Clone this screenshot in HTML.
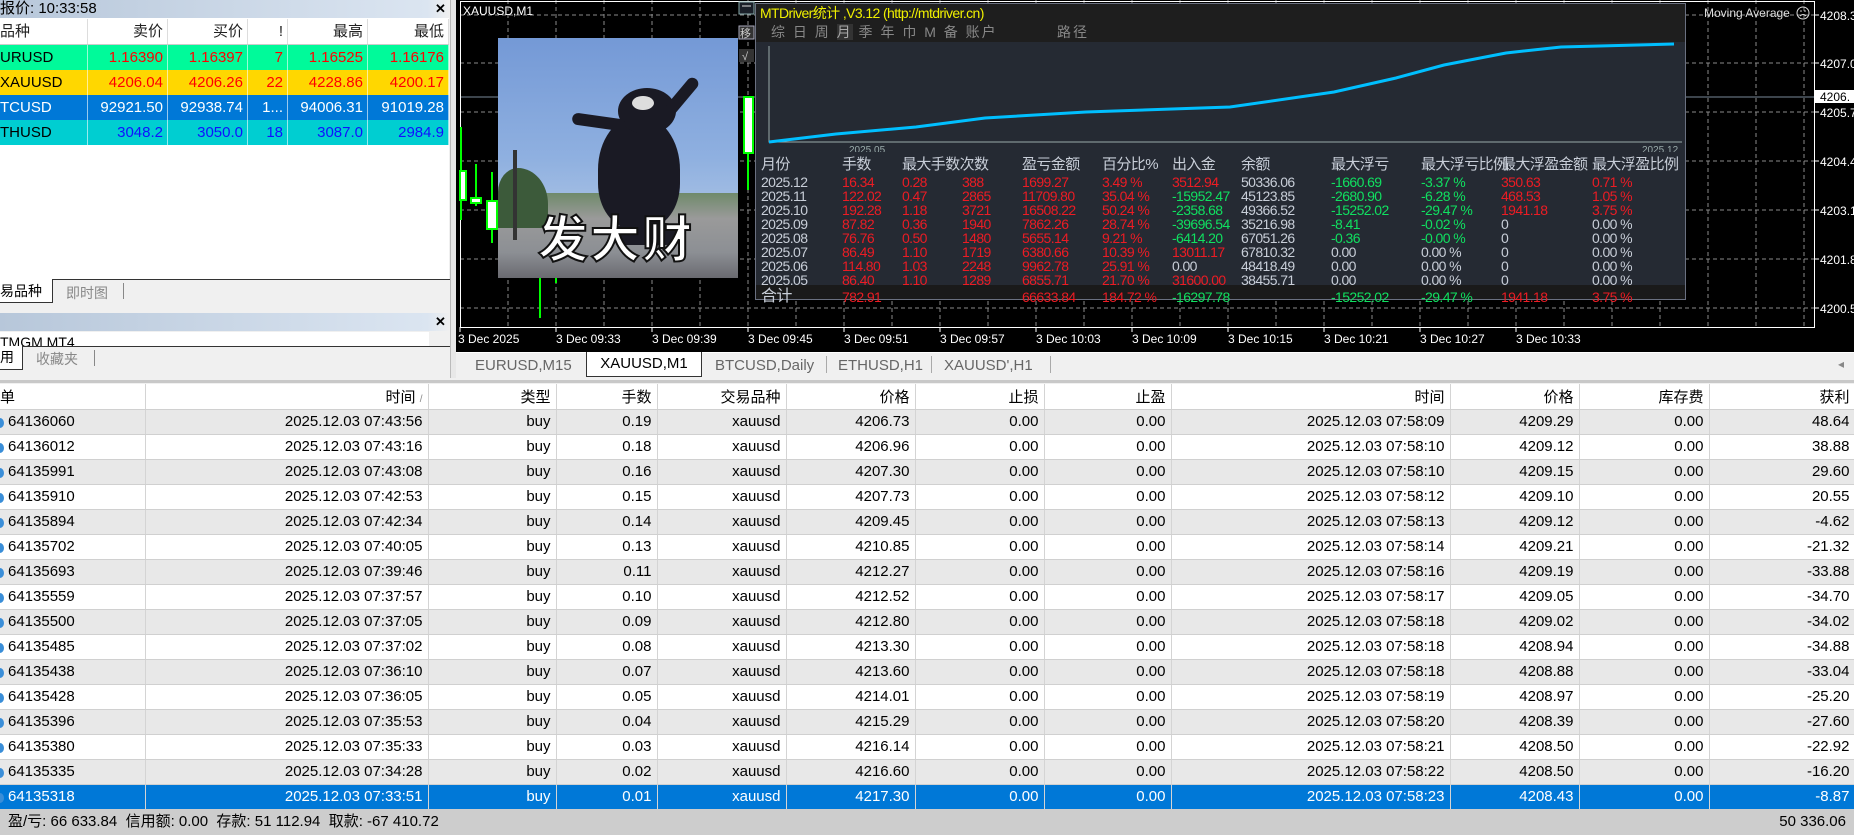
<!DOCTYPE html>
<html><head><meta charset="utf-8"><style>
*{margin:0;padding:0;box-sizing:border-box}
body{width:1854px;height:835px;overflow:hidden;background:#f0f0f0;font-family:"Liberation Sans","Noto Sans CJK SC",sans-serif;position:relative}
.a{position:absolute;white-space:nowrap}
.q{position:absolute;left:0;width:449px;height:25px;font-size:15px;line-height:25px}
.q span{position:absolute;top:0;height:25px;text-align:right;padding-right:4px;border-right:1px solid rgba(255,255,255,.6)}
.mt{position:absolute;font-family:"Liberation Sans Narrow","Liberation Sans","Noto Sans CJK SC",sans-serif;font-size:14px;letter-spacing:-.6px;line-height:14px;white-space:nowrap}
.r{color:#ec1c24}.g{color:#10e060}.w{color:#c8ced8}
table{border-collapse:collapse;table-layout:fixed;position:absolute;left:0;top:384px;width:1854px;font-size:15px}
td{height:25px;text-align:right;padding-right:5px;border-right:1px solid #d4d4d4;border-bottom:1px solid #d0d0d0;white-space:nowrap;overflow:hidden}
tr.h td{background:#fff;height:25px}
tr.o td{background:#e8e8e8}
tr.e td{background:#fff}
tr.s td{background:#0078d7;color:#fff}
td.f{text-align:left;padding-left:8px;position:relative}
</style></head><body>

<!-- Quote panel -->
<div class="a" style="left:0;top:0;width:450px;height:18px;background:linear-gradient(90deg,#b7c7da,#dbe5f1 95%,#f0f0f0);font-size:15px;line-height:18px;padding-left:0">报价: 10:33:58</div>
<div class="a" style="left:435px;top:1px;font-size:13px;font-weight:bold">✕</div>
<div class="a" style="left:0;top:18px;width:449px;height:262px;background:#fff"></div>
<div class="q" style="top:19px;background:#fff;color:#222;height:26px;line-height:26px;border-bottom:1px solid #ccc">
<span style="left:0;width:88px;text-align:left;border-color:#ddd">品种</span><span style="left:88px;width:80px;border-color:#ddd">卖价</span><span style="left:168px;width:80px;border-color:#ddd">买价</span><span style="left:248px;width:40px;border-color:#ddd">!</span><span style="left:288px;width:80px;border-color:#ddd">最高</span><span style="left:368px;width:81px;border-color:#ddd">最低</span></div>
<div class="q" style="top:45px;background:#00fa9a;color:#f00"><span style="left:0;width:88px;text-align:left;color:#000">URUSD</span><span style="left:88px;width:80px">1.16390</span><span style="left:168px;width:80px">1.16397</span><span style="left:248px;width:40px">7</span><span style="left:288px;width:80px">1.16525</span><span style="left:368px;width:81px">1.16176</span></div>
<div class="q" style="top:70px;background:#ffd700;color:#f00"><span style="left:0;width:88px;text-align:left;color:#000">XAUUSD</span><span style="left:88px;width:80px">4206.04</span><span style="left:168px;width:80px">4206.26</span><span style="left:248px;width:40px">22</span><span style="left:288px;width:80px">4228.86</span><span style="left:368px;width:81px">4200.17</span></div>
<div class="q" style="top:95px;background:#0078d7;color:#fff"><span style="left:0;width:88px;text-align:left">TCUSD</span><span style="left:88px;width:80px">92921.50</span><span style="left:168px;width:80px">92938.74</span><span style="left:248px;width:40px">1...</span><span style="left:288px;width:80px">94006.31</span><span style="left:368px;width:81px">91019.28</span></div>
<div class="q" style="top:120px;background:#00ced1;color:#1010ff"><span style="left:0;width:88px;text-align:left;color:#000">THUSD</span><span style="left:88px;width:80px">3048.2</span><span style="left:168px;width:80px">3050.0</span><span style="left:248px;width:40px">18</span><span style="left:288px;width:80px">3087.0</span><span style="left:368px;width:81px">2984.9</span></div>
<div class="a" style="left:0;top:279px;width:450px;height:26px;background:#f0f0f0;border-top:1px solid #333"></div>
<div class="a" style="left:0;top:279px;width:53px;height:24px;background:#fff;border-right:1px solid #333;border-bottom:1px solid #333;font-size:14px;line-height:24px">易品种</div>
<div class="a" style="left:66px;top:283px;font-size:14px;color:#888">即时图</div>
<div class="a" style="left:123px;top:283px;width:1px;height:16px;background:#888"></div>
<div class="a" style="left:0;top:313px;width:450px;height:18px;background:linear-gradient(90deg,#b7c7da,#dbe5f1 95%,#f0f0f0)"></div>
<div class="a" style="left:435px;top:314px;font-size:13px;font-weight:bold">✕</div>
<div class="a" style="left:0;top:332px;width:429px;height:15px;background:#fff;overflow:hidden;font-size:14px;line-height:20px">TMGM MT4</div>
<div class="a" style="left:0;top:346px;width:450px;height:1px;background:#333"></div>
<div class="a" style="left:0;top:346px;width:23px;height:24px;background:#fff;border-right:1px solid #333;border-bottom:1px solid #333;font-size:14px;line-height:22px">用</div>
<div class="a" style="left:36px;top:349px;font-size:14px;color:#888">收藏夹</div>
<div class="a" style="left:94px;top:350px;width:1px;height:16px;background:#888"></div>
<div class="a" style="left:450px;top:0;width:6px;height:378px;background:#e8e8e8;border-left:1px solid #bbb"></div>

<!-- Chart -->
<div class="a" style="left:456px;top:0;width:1398px;height:352px;background:#000"></div>
<svg class="a" style="left:0;top:0" width="1854" height="352">
<g stroke="#8a8a8a" stroke-dasharray="4,3" stroke-width="1">
<path d="M460 15H1814M460 63H1814M460 112H1814M460 161H1814M460 210H1814M460 259H1814M460 308H1814"/>
<path d="M508 0V327M556 0V327M604 0V327M652 0V327M700 0V327M748 0V327M796 0V327M844 0V327M892 0V327M940 0V327M988 0V327M1036 0V327M1084 0V327M1132 0V327M1180 0V327M1228 0V327M1276 0V327M1324 0V327M1372 0V327M1420 0V327M1468 0V327M1516 0V327M1564 0V327M1612 0V327M1660 0V327M1708 0V327M1756 0V327M1804 0V327"/>
</g>
<path d="M460 97H1814" stroke="#778899"/>
<rect x="460.5" y="1.5" width="1354" height="326" fill="none" stroke="#fff"/>
<g stroke="#fff"><path d="M460 327v5M556 327v5M652 327v5M748 327v5M844 327v5M940 327v5M1036 327v5M1132 327v5M1228 327v5M1324 327v5M1420 327v5M1516 327v5M1814 15h5M1814 63h5M1814 112h5M1814 161h5M1814 210h5M1814 259h5M1814 308h5"/></g>
<g stroke="#0f0" stroke-width="2" fill="#fff">
<path d="M461 127V220M476 164V206M492 172V243M540 278V318M556 278V283M748 97V190"/>
<rect x="460" y="171" width="6" height="29"/><rect x="471" y="198" width="10" height="5"/><rect x="487" y="201" width="10" height="28"/><rect x="744" y="97" width="9" height="56"/>
</g>
<g fill="#fff" font-size="12" font-family="Liberation Sans,sans-serif">
<text x="463" y="15">XAUUSD,M1</text>
<text x="458" y="343">3 Dec 2025</text><text x="556" y="343">3 Dec 09:33</text><text x="652" y="343">3 Dec 09:39</text><text x="748" y="343">3 Dec 09:45</text><text x="844" y="343">3 Dec 09:51</text><text x="940" y="343">3 Dec 09:57</text><text x="1036" y="343">3 Dec 10:03</text><text x="1132" y="343">3 Dec 10:09</text><text x="1228" y="343">3 Dec 10:15</text><text x="1324" y="343">3 Dec 10:21</text><text x="1420" y="343">3 Dec 10:27</text><text x="1516" y="343">3 Dec 10:33</text>
<text x="1820" y="20">4208.3</text><text x="1820" y="68">4207.0</text><text x="1820" y="117">4205.7</text><text x="1820" y="166">4204.4</text><text x="1820" y="215">4203.1</text><text x="1820" y="264">4201.8</text><text x="1820" y="313">4200.5</text>
<text x="1704" y="17" fill="#ddd">Moving Average</text>
</g>
<rect x="1815" y="90" width="39" height="13" fill="#fff"/><text x="1820" y="101" font-size="12" font-family="Liberation Sans,sans-serif">4206.</text>
<circle cx="1803" cy="13" r="6" fill="none" stroke="#ddd"/><circle cx="1801" cy="11" r=".8" fill="#ddd"/><circle cx="1805" cy="11" r=".8" fill="#ddd"/><path d="M1800 16q3-3 6 0" stroke="#ddd" fill="none"/>
<rect x="739" y="2" width="15" height="12" fill="#1a1f28" stroke="#8aa"/><path d="M742 6h9" stroke="#ddd"/>
<rect x="739" y="26" width="15" height="13" fill="#333" stroke="#aab"/><text x="740" y="37" font-size="11" fill="#ccc">移</text>
<rect x="739" y="49" width="15" height="13" fill="#333"/><text x="742" y="60" font-size="11" fill="#ccc">√</text>
</svg>

<!-- Kumamon image -->
<div class="a" style="left:498px;top:38px;width:240px;height:240px;overflow:hidden;background:linear-gradient(180deg,#7499d6 0%,#8fb0e0 50%,#a9c2e4 75%)">
<div class="a" style="left:0;top:155px;width:240px;height:85px;background:linear-gradient(180deg,#6f8a6a,#9a9a9a 30%,#8c8f94 70%,#6a6a70)"></div>
<div class="a" style="left:0;top:130px;width:50px;height:60px;background:#3c5a3a;border-radius:40% 60% 0 0"></div>
<div class="a" style="left:15px;top:112px;width:4px;height:90px;background:#333"></div>
<div class="a" style="left:100px;top:78px;width:82px;height:112px;background:#1a1a24;border-radius:48% 48% 40% 40%"></div>
<div class="a" style="left:120px;top:50px;width:58px;height:46px;background:#1a1a24;border-radius:50%"></div>
<div class="a" style="left:134px;top:58px;width:22px;height:14px;background:#ddd;border-radius:50%"></div>
<div class="a" style="left:74px;top:78px;width:54px;height:12px;background:#1a1a24;border-radius:6px;transform:rotate(8deg)"></div>
<div class="a" style="left:162px;top:52px;width:44px;height:12px;background:#1a1a24;border-radius:6px;transform:rotate(-50deg)"></div>
<div class="a" style="left:118px;top:185px;width:60px;height:22px;background:#1a1a24;border-radius:10px"></div>
<div class="a" style="left:40px;top:168px;font-size:50px;font-weight:bold;color:#fff;font-family:'Noto Sans CJK SC',sans-serif;line-height:60px;-webkit-text-stroke:2px #111;letter-spacing:2px">发大财</div>
</div>

<!-- MTDriver panel -->
<div class="a" style="left:755px;top:3px;width:931px;height:297px;background:#252a33;border:1px solid #6a7080"></div>
<div class="a" style="left:756px;top:4px;width:929px;height:38px;background:#1e1e1e"></div>
<div class="mt" style="left:760px;top:6px;color:#f0f000;font-size:14px">MTDriver统计 ,V3.12 (http://mtdriver.cn)</div>
<div class="mt" style="left:771px;top:25px;color:#888;font-size:14px;word-spacing:0;letter-spacing:2px">综 日 周 <span style="background:#333;color:#aaa">月</span> 季 年 巾 M 备 账户</div>
<div class="mt" style="left:1057px;top:25px;color:#888;font-size:14px;letter-spacing:2px">路径</div>
<svg class="a" style="left:756px;top:42px" width="929" height="110">
<path d="M13 4V100H926" stroke="#9aa" fill="none"/>
<polyline points="13,100 80,92 160,85 229,76 330,70 474,65 578,50 640,36 688,23 750,11 805,5 918,2" stroke="#00bfff" stroke-width="3" fill="none"/>
<text x="93" y="111" fill="#9aa" font-size="10" font-family="Liberation Sans,sans-serif">2025.05</text>
<text x="886" y="111" fill="#9aa" font-size="10" font-family="Liberation Sans,sans-serif">2025.12</text>
</svg>
<div class="a" style="left:756px;top:285px;width:929px;height:14px;background:#1a1a1a"></div>
<div id="mtt"></div>
<div class="mt w" style="left:761px;top:158px;font-size:15px">月份</div>
<div class="mt w" style="left:842px;top:158px;font-size:15px">手数</div>
<div class="mt w" style="left:902px;top:158px;font-size:15px">最大手数次数</div>
<div class="mt w" style="left:1022px;top:158px;font-size:15px">盈亏金额</div>
<div class="mt w" style="left:1102px;top:158px;font-size:15px">百分比%</div>
<div class="mt w" style="left:1172px;top:158px;font-size:15px">出入金</div>
<div class="mt w" style="left:1241px;top:158px;font-size:15px">余额</div>
<div class="mt w" style="left:1331px;top:158px;font-size:15px">最大浮亏</div>
<div class="mt w" style="left:1421px;top:158px;font-size:15px">最大浮亏比例</div>
<div class="mt w" style="left:1501px;top:158px;font-size:15px">最大浮盈金额</div>
<div class="mt w" style="left:1592px;top:158px;font-size:15px">最大浮盈比例</div>
<script>
(function(){
var X=[761,842,902,962,1022,1102,1172,1241,1331,1421,1501,1592];
var R=[
["2025.12","16.34","0.28","388","1699.27","3.49 %","r3512.94","50336.06","g-1660.69","g-3.37 %","r350.63","r0.71 %"],
["2025.11","122.02","0.47","2865","11709.80","35.04 %","g-15952.47","45123.85","g-2680.90","g-6.28 %","r468.53","r1.05 %"],
["2025.10","192.28","1.18","3721","16508.22","50.24 %","g-2358.68","49366.52","g-15252.02","g-29.47 %","r1941.18","r3.75 %"],
["2025.09","87.82","0.36","1940","7862.26","28.74 %","g-39696.54","35216.98","g-8.41","g-0.02 %","w0","w0.00 %"],
["2025.08","76.76","0.50","1480","5655.14","9.21 %","g-6414.20","67051.26","g-0.36","g-0.00 %","w0","w0.00 %"],
["2025.07","86.49","1.10","1719","6380.66","10.39 %","r13011.17","67810.32","w0.00","w0.00 %","w0","w0.00 %"],
["2025.06","114.80","1.03","2248","9962.78","25.91 %","w0.00","48418.49","w0.00","w0.00 %","w0","w0.00 %"],
["2025.05","86.40","1.10","1289","6855.71","21.70 %","r31600.00","38455.71","w0.00","w0.00 %","w0","w0.00 %"],
["合计","782.91","","","66633.84","184.72 %","g-16297.78","","g-15252.02","g-29.47 %","r1941.18","r3.75 %"]];
var h="";
for(var i=0;i<R.length;i++){var y=175+i*14+(i==8?3:0);
for(var j=0;j<12;j++){var v=R[i][j];if(!v)continue;var c;
if(j==0||j==7)c="w";else if(j<6)c="r";else{c=v[0];v=v.slice(1);}
h+='<div class="mt '+c+'" style="left:'+X[j]+'px;top:'+y+'px'+(i==8&&j==0?';font-size:16px':'')+'">'+v+'</div>';}}
document.getElementById("mtt").innerHTML=h;
})();
</script>

<!-- chart tabs -->
<div class="a" style="left:456px;top:352px;width:1398px;height:26px;background:#f0f0f0;border-top:1px solid #fff"></div>
<div class="a" style="left:475px;top:357px;font-size:15px;color:#666">EURUSD,M15</div>
<div class="a" style="left:586px;top:352px;width:116px;height:25px;background:#fff;border:1px solid #333;border-top:none;font-size:15px;line-height:23px;text-align:center">XAUUSD,M1</div>
<div class="a" style="left:715px;top:357px;font-size:15px;color:#666">BTCUSD,Daily</div>
<div class="a" style="left:826px;top:356px;width:1px;height:17px;background:#aaa"></div>
<div class="a" style="left:838px;top:357px;font-size:15px;color:#666">ETHUSD,H1</div>
<div class="a" style="left:931px;top:356px;width:1px;height:17px;background:#aaa"></div>
<div class="a" style="left:944px;top:357px;font-size:15px;color:#666">XAUUSD',H1</div>
<div class="a" style="left:1050px;top:356px;width:1px;height:17px;background:#aaa"></div>
<div class="a" style="left:1838px;top:357px;font-size:12px;color:#888">◂</div>
<div class="a" style="left:0;top:380px;width:1854px;height:3px;background:#c8c8c8"></div>

<table>
<colgroup><col style="width:145px"><col style="width:283px"><col style="width:128px"><col style="width:101px"><col style="width:129px"><col style="width:129px"><col style="width:129px"><col style="width:127px"><col style="width:279px"><col style="width:129px"><col style="width:130px"><col style="width:146px"></colgroup>
<tbody id="tb"><tr class="h"><td class="f" style="padding-left:0">单</td><td>时间 <span style="font-size:10px;color:#888">/</span></td><td>类型</td><td>手数</td><td>交易品种</td><td>价格</td><td>止损</td><td>止盈</td><td>时间</td><td>价格</td><td>库存费</td><td>获利</td></tr></tbody>
</table>
<script>
(function(){
var D=[["64136060","07:43:56","0.19","4206.73","07:58:09","4209.29","48.64"],
["64136012","07:43:16","0.18","4206.96","07:58:10","4209.12","38.88"],
["64135991","07:43:08","0.16","4207.30","07:58:10","4209.15","29.60"],
["64135910","07:42:53","0.15","4207.73","07:58:12","4209.10","20.55"],
["64135894","07:42:34","0.14","4209.45","07:58:13","4209.12","-4.62"],
["64135702","07:40:05","0.13","4210.85","07:58:14","4209.21","-21.32"],
["64135693","07:39:46","0.11","4212.27","07:58:16","4209.19","-33.88"],
["64135559","07:37:57","0.10","4212.52","07:58:17","4209.05","-34.70"],
["64135500","07:37:05","0.09","4212.80","07:58:18","4209.02","-34.02"],
["64135485","07:37:02","0.08","4213.30","07:58:18","4208.94","-34.88"],
["64135438","07:36:10","0.07","4213.60","07:58:18","4208.88","-33.04"],
["64135428","07:36:05","0.05","4214.01","07:58:19","4208.97","-25.20"],
["64135396","07:35:53","0.04","4215.29","07:58:20","4208.39","-27.60"],
["64135380","07:35:33","0.03","4216.14","07:58:21","4208.50","-22.92"],
["64135335","07:34:28","0.02","4216.60","07:58:22","4208.50","-16.20"],
["64135318","07:33:51","0.01","4217.30","07:58:23","4208.43","-8.87"]];
var h="";
for(var i=0;i<D.length;i++){var d=D[i];var c=i==15?"s":(i%2?"e":"o");
h+='<tr class="'+c+'"><td class="f"><span style="position:absolute;left:-4px;top:8px;width:8px;height:10px;border-radius:50%;background:#3a8ed8"></span>'+d[0]+'</td><td>2025.12.03 '+d[1]+'</td><td>buy</td><td>'+d[2]+'</td><td>xauusd</td><td>'+d[3]+'</td><td>0.00</td><td>0.00</td><td>2025.12.03 '+d[4]+'</td><td>'+d[5]+'</td><td>0.00</td><td>'+d[6]+'</td></tr>';}
document.getElementById("tb").insertAdjacentHTML("beforeend",h);
})();
</script>
<div class="a" style="left:0;top:809px;width:1854px;height:26px;background:#cdcdcd;font-size:15px;line-height:26px;padding-left:8px">盈/亏: 66 633.84&nbsp; 信用额: 0.00&nbsp; 存款: 51 112.94&nbsp; 取款: -67 410.72</div>
<div class="a" style="right:8px;top:809px;font-size:15px;line-height:26px">50 336.06</div>
</body></html>
